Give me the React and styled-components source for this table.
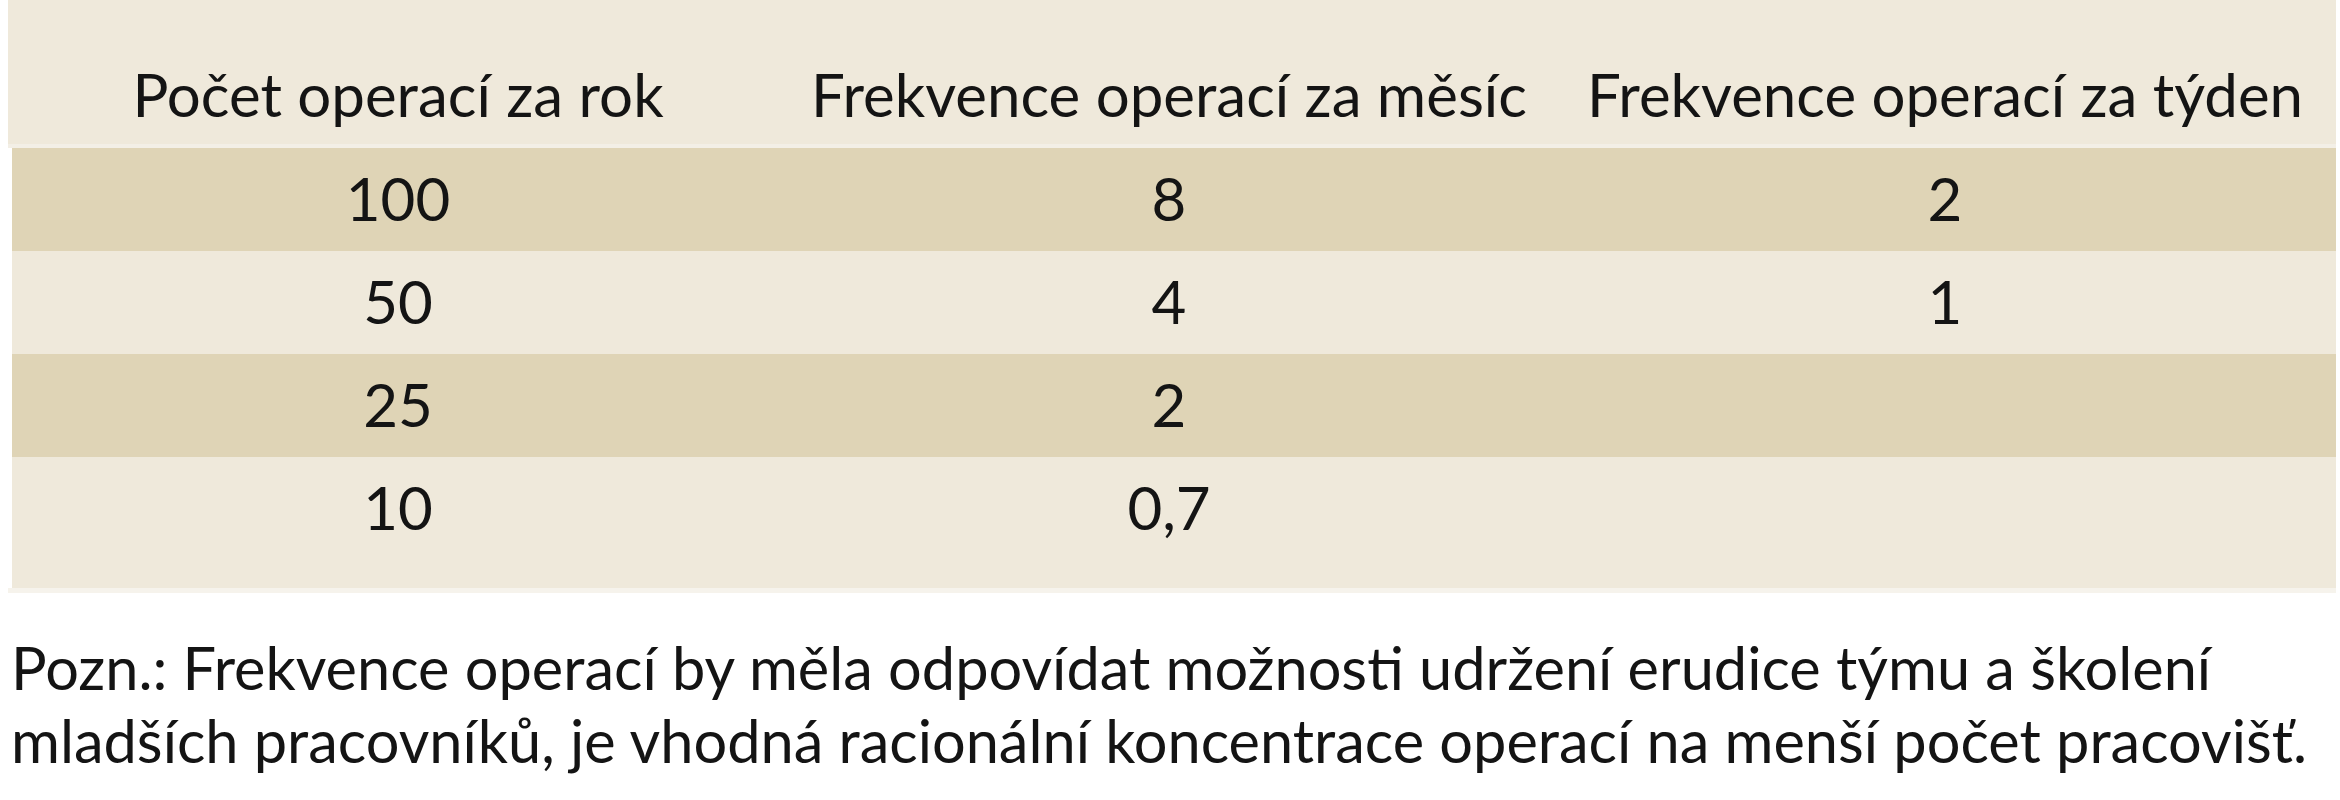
import React from 'react';
import styled, { createGlobalStyle } from 'styled-components';

const GlobalStyle = createGlobalStyle`
  html, body {
    margin: 0;
    padding: 0;
    background: #ffffff;
  }
  body {
    padding: 0 4px 0 8px;
    font-family: Lato, "Open Sans", sans-serif;
    color: #141414;
  }
`;

const colors = {
  light: '#efe9db',
  dark: '#dfd4b6',
  rule: '#f3efe6',
  edge: '#f6f3ec',
};

// the three columns are close to equal, the last one a touch wider
const columns = '772px 770px 1fr';

const Table = styled.div`
  display: flex;
  flex-direction: column;
  border-bottom: 5px solid ${colors.edge};
`;

const HeadRow = styled.div`
  display: grid;
  grid-template-columns: ${columns};
  padding: 58px 0 0 4px;
  height: 148px;
  box-sizing: border-box;
  background: ${colors.light};
  border-bottom: 4px solid ${colors.rule};
`;

const Row = styled.div`
  display: grid;
  grid-template-columns: ${columns};
  margin-left: 4px;
  height: ${(p) => p.$height || 103}px;
  padding-top: 14px;
  box-sizing: border-box;
  background: ${(p) => (p.$shaded ? colors.dark : colors.light)};
`;

const HeadCell = styled.div`
  font-size: 60px;
  line-height: 72px;
  text-align: center;
  white-space: nowrap;
`;

const Cell = styled.div`
  font-size: 60px;
  line-height: 72px;
  text-align: center;
`;

const Note = styled.p`
  margin: 38px 0 0 3px;
  font-size: 59.5px;
  line-height: 73px;
`;

const headers = ['Počet operací za rok', 'Frekvence operací za měsíc', 'Frekvence operací za týden'];

const rows = [
  ['100', '8', '2'],
  ['50', '4', '1'],
  ['25', '2', ''],
  ['10', '0,7', ''],
];

export default function App() {
  return (
    <>
      <GlobalStyle />
      <Table>
        <HeadRow>
          {headers.map((h) => (
            <HeadCell key={h}>{h}</HeadCell>
          ))}
        </HeadRow>
        {rows.map((r, i) => (
          <Row key={r[0]} $shaded={i % 2 === 0} $height={i === rows.length - 1 ? 131 : 103}>
            {r.map((c, j) => (
              <Cell key={j}>{c}</Cell>
            ))}
          </Row>
        ))}
      </Table>
      <Note>
        Pozn.: Frekvence operací by měla odpovídat možnosti udržení erudice týmu a školení mladších
        pracovníků, je vhodná racionální koncentrace operací na menší počet pracovišť.
      </Note>
    </>
  );
}
